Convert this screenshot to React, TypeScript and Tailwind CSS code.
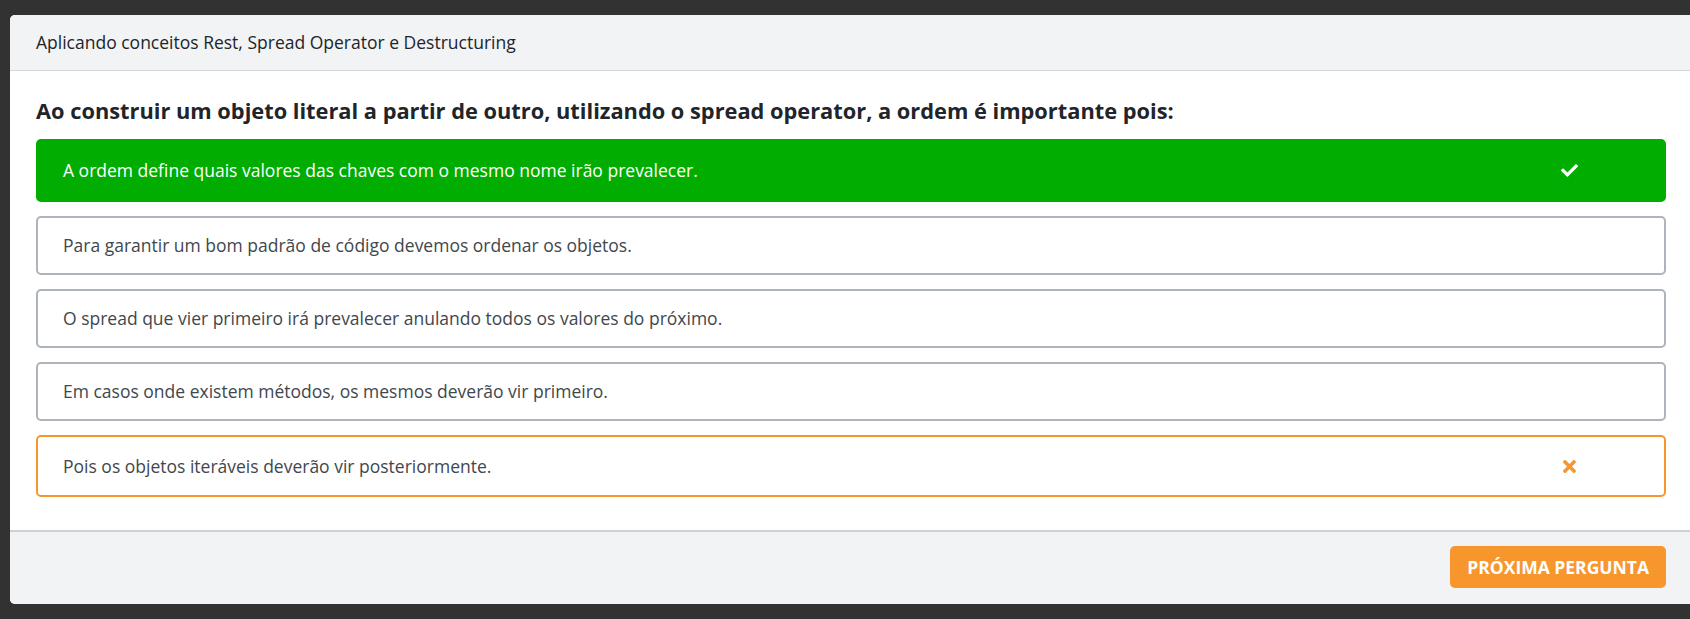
import React from "react";

type Status = "correct" | "wrong" | "neutral";

interface Option {
  text: string;
  status: Status;
}

const OPTIONS: Option[] = [
  { text: "A ordem define quais valores das chaves com o mesmo nome irão prevalecer.", status: "correct" },
  { text: "Para garantir um bom padrão de código devemos ordenar os objetos.", status: "neutral" },
  { text: "O spread que vier primeiro irá prevalecer anulando todos os valores do próximo.", status: "neutral" },
  { text: "Em casos onde existem métodos, os mesmos deverão vir primeiro.", status: "neutral" },
  { text: "Pois os objetos iteráveis deverão vir posteriormente.", status: "wrong" },
];

function CheckIcon() {
  return (
    <svg width="17" height="13" viewBox="0 64 512 384" fill="currentColor">
      <path d="M173.898 439.404l-166.4-166.4c-9.997-9.997-9.997-26.206 0-36.204l36.203-36.204c9.997-9.998 26.207-9.998 36.204 0L192 312.69 432.095 72.596c9.997-9.997 26.207-9.997 36.204 0l36.203 36.204c9.997 9.997 9.997 26.206 0 36.204l-294.4 294.401c-9.998 9.997-26.207 9.997-36.204-.001z" />
    </svg>
  );
}

function TimesIcon() {
  return (
    <svg width="13" height="13" viewBox="0 80 352 352" fill="currentColor">
      <path d="M242.72 256l100.07-100.07c12.28-12.28 12.28-32.19 0-44.48l-22.24-22.24c-12.28-12.28-32.19-12.28-44.48 0L176 189.28 75.93 89.21c-12.28-12.28-32.19-12.28-44.48 0L9.21 111.45c-12.28 12.28-12.28 32.19 0 44.48L109.28 256 9.21 356.07c-12.28 12.28-12.28 32.19 0 44.48l22.24 22.24c12.28 12.28 32.2 12.28 44.48 0L176 322.72l100.07 100.07c12.28 12.28 32.2 12.28 44.48 0l22.24-22.24c12.28-12.28 12.28-32.19 0-44.48L242.72 256z" />
    </svg>
  );
}

function OptionRow({ option }: { option: Option }) {
  const base = "flex items-center rounded-[5px] border-2 pl-[25px] text-[17.5px]";
  const variant =
    option.status === "correct"
      ? "h-[63px] border-[#00ad00] bg-[#00ad00] text-white"
      : option.status === "wrong"
        ? "h-[62px] border-[#f7962d] bg-white text-[#41474d]"
        : "h-[59px] border-[#adb4bc] bg-white text-[#41474d]";

  return (
    <div className={`${base} ${variant}`}>
      <span className="flex-1">{option.text}</span>
      <span className="mr-[86px] flex w-[17px] justify-center">
        {option.status === "correct" && <span className="text-white"><CheckIcon /></span>}
        {option.status === "wrong" && <span className="text-[#f7962d]"><TimesIcon /></span>}
      </span>
    </div>
  );
}

export default function App() {
  return (
    <div
      className="h-[619px] w-full overflow-hidden bg-[#323232] pl-[10px] pt-[15px]"
      style={{ fontFamily: '"Open Sans", "Noto Sans", sans-serif' }}
    >
      <div className="flex h-[589px] flex-col overflow-hidden rounded-l-[5px] bg-white">
        {/* Header */}
        <div className="flex h-[56px] items-center border-b border-[#d3d6da] bg-[#f2f3f5] px-[26px] text-[17.5px] text-[#212529]">
          Aplicando conceitos Rest, Spread Operator e Destructuring
        </div>

        {/* Body */}
        <div className="flex-1 pl-[26px] pr-[24px] pt-[25px]">
          <h2 className="mb-[13px] text-[21.8px] font-bold leading-[30px] text-[#212529]">
            Ao construir um objeto literal a partir de outro, utilizando o spread operator, a ordem é importante pois:
          </h2>
          <div className="flex flex-col gap-[14px]">
            {OPTIONS.map((opt, i) => (
              <OptionRow key={i} option={opt} />
            ))}
          </div>
        </div>

        {/* Footer */}
        <div className="flex h-[74px] items-start justify-end border-t-2 border-[#cdd0d4] bg-[#f2f3f5] pr-[24px] pt-[14px]">
          <button
            type="button"
            className="h-[42px] rounded-[5px] bg-[#f7962d] px-[17px] text-[17.5px] font-bold uppercase text-white"
          >
            Próxima Pergunta
          </button>
        </div>
      </div>
    </div>
  );
}
